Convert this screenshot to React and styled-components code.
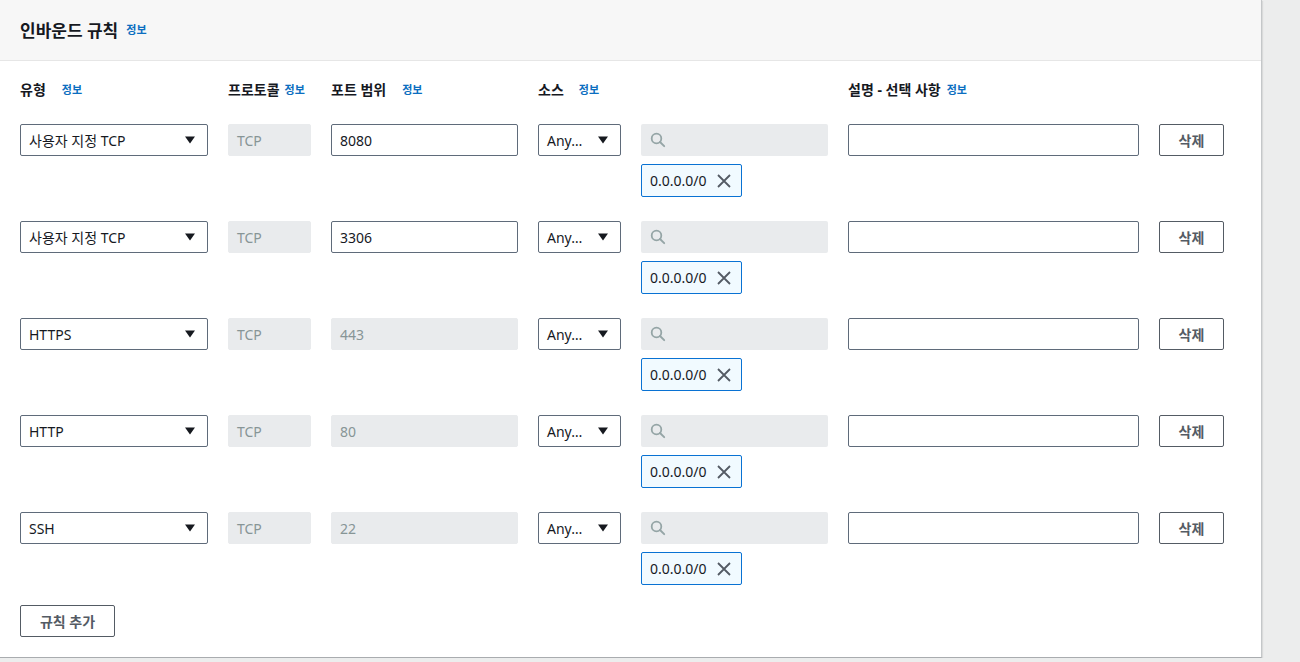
import React from "react";
import styled, { createGlobalStyle } from "styled-components";

const GlobalStyle = createGlobalStyle`
  html, body {
    margin: 0;
    padding: 0;
    background: #eceded;
    font-family: "Noto Sans", "Noto Sans CJK KR", sans-serif;
    color: #16191f;
  }
  * { box-sizing: border-box; }
`;

const rules = [
  { type: "사용자 지정 TCP", port: "8080", editable: true },
  { type: "사용자 지정 TCP", port: "3306", editable: true },
  { type: "HTTPS", port: "443" },
  { type: "HTTP", port: "80" },
  { type: "SSH", port: "22" },
];

const Caret = () => (
  <svg width="12" height="10" viewBox="0 0 12 10">
    <path d="M1 1.5h10L6 8.5z" fill="#16191f" />
  </svg>
);

const SearchIcon = () => (
  <svg width="16" height="16" viewBox="0 0 16 16" fill="none">
    <circle cx="6.5" cy="6.5" r="4.8" stroke="#95a5a6" strokeWidth="1.8" />
    <path d="M10 10l4.2 4.2" stroke="#95a5a6" strokeWidth="1.9" strokeLinecap="round" />
  </svg>
);

const CloseIcon = () => (
  <svg width="16" height="16" viewBox="0 0 16 16" fill="none">
    <path d="M2 2l12 12M14 2L2 14" stroke="#545b64" strokeWidth="1.8" />
  </svg>
);

const App = () => {
  return (
    <>
      <GlobalStyle />
      <Panel>
        <Header>
          <Title>인바운드 규칙</Title>
          <InfoLink>정보</InfoLink>
        </Header>
        <Body>
          <Grid>
            <ColLabel>
              유형<InfoLink gap={16}>정보</InfoLink>
            </ColLabel>
            <ColLabel>
              프로토콜<InfoLink gap={5}>정보</InfoLink>
            </ColLabel>
            <ColLabel>
              포트 범위<InfoLink gap={16}>정보</InfoLink>
            </ColLabel>
            <ColLabel span={2}>
              소스<InfoLink gap={15}>정보</InfoLink>
            </ColLabel>
            <ColLabel span={2}>
              설명 - 선택 사항<InfoLink gap={6}>정보</InfoLink>
            </ColLabel>
          </Grid>
          {rules.map((rule, i) => (
            <RuleRow key={i}>
              <Select>
                <span>{rule.type}</span>
                <Caret />
              </Select>
              <Field disabled>TCP</Field>
              <Field disabled={!rule.editable}>{rule.port}</Field>
              <Select>
                <span>Any…</span>
                <Caret />
              </Select>
              <SourceCell>
                <SearchBox>
                  <SearchIcon />
                </SearchBox>
                <Token>
                  0.0.0.0/0
                  <CloseIcon />
                </Token>
              </SourceCell>
              <Field />
              <Button>삭제</Button>
            </RuleRow>
          ))}
          <AddButton>규칙 추가</AddButton>
        </Body>
      </Panel>
    </>
  );
};

export default App;

const Panel = styled.div`
  width: 1262px;
  height: 658px;
  background: #ffffff;
  border-right: 1px solid #c4c7c9;
  border-bottom: 1px solid #a9acaf;
  box-shadow: 1px 1px 1px rgba(0, 0, 0, 0.08);
  display: flex;
  flex-direction: column;
`;

const Header = styled.div`
  height: 62px;
  background: #f7f7f7;
  border-bottom: 1px solid #e6e6e6;
  display: flex;
  align-items: center;
  padding: 0 20px 2px;
`;

const Title = styled.h2`
  margin: 0;
  font-size: 17px;
  font-weight: 700;
  color: #16191f;
`;

const InfoLink = styled.a`
  font-size: 11px;
  font-weight: 700;
  color: #0b6ec0;
  margin-left: ${({ gap }) => (gap ?? 8)}px;
  cursor: pointer;
`;

const Body = styled.div`
  padding: 19px 20px 20px;
  display: flex;
  flex-direction: column;
`;

const Grid = styled.div`
  display: grid;
  grid-template-columns: 188px 83px 187px 83px 187px 291px 65px;
  column-gap: 20px;
  align-items: start;
`;

const ColLabel = styled.div`
  grid-column: span ${({ span }) => span || 1};
  font-size: 14px;
  font-weight: 700;
  line-height: 20px;
  height: 20px;
  display: flex;
  align-items: center;
  margin-bottom: 24px;
`;

const RuleRow = styled(Grid)`
  margin-bottom: 24px;
`;

const Select = styled.div`
  height: 32px;
  border: 1px solid #5f6b7a;
  border-radius: 2px;
  display: flex;
  align-items: center;
  justify-content: space-between;
  padding: 0 11px 0 8px;
  font-size: 14px;
  white-space: nowrap;
  color: #16191f;
`;

const Field = styled.div`
  height: 32px;
  border: 1px solid ${({ disabled }) => (disabled ? "#e9ebed" : "#5f6b7a")};
  border-radius: 2px;
  background: ${({ disabled }) => (disabled ? "#e9ebed" : "#ffffff")};
  color: ${({ disabled }) => (disabled ? "#879596" : "#16191f")};
  display: flex;
  align-items: center;
  padding: 0 8px;
  font-size: 14px;
`;

const SourceCell = styled.div`
  display: flex;
  flex-direction: column;
  align-items: flex-start;
  gap: 8px;
`;

const SearchBox = styled.div`
  width: 100%;
  height: 32px;
  background: #e9ebed;
  border-radius: 2px;
  display: flex;
  align-items: center;
  padding: 0 9px;
`;

const Token = styled.div`
  height: 33px;
  width: 101px;
  border: 1px solid #0972d3;
  border-radius: 2px;
  background: #f1faff;
  display: flex;
  align-items: center;
  justify-content: space-between;
  padding: 0 9px 0 8px;
  font-size: 14px;
  color: #16191f;
`;

const Button = styled.button`
  height: 32px;
  border: 1px solid #545b64;
  border-radius: 2px;
  background: #ffffff;
  font-family: inherit;
  font-size: 14px;
  font-weight: 700;
  color: #545b64;
  padding: 0;
  cursor: pointer;
`;

const AddButton = styled(Button)`
  width: 95px;
  margin-top: -4px;
`;
